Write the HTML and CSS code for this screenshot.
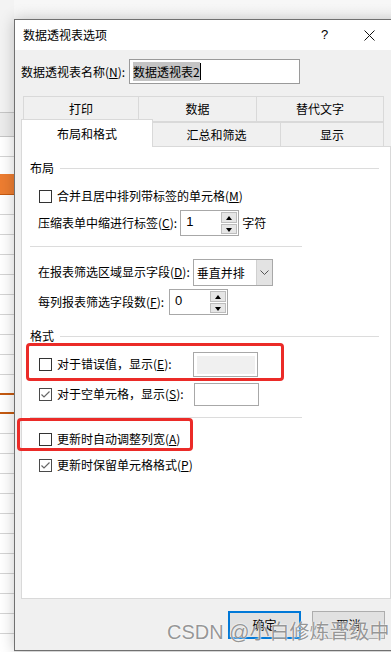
FILE: index.html
```html
<!DOCTYPE html>
<html lang="zh-CN">
<head>
<meta charset="utf-8">
<title>数据透视表选项</title>
<link rel="stylesheet" href="styles.css">
</head>
<body>
<div class="desktop">
  <div class="sheet">
    <div class="sheet-top"></div>
    <div class="sheet-head"></div>
    <div class="sheet-rows short"></div>
    <div class="sheet-sel"></div>
    <div class="sheet-rows mid"></div>
    <div class="sheet-band"></div>
    <div class="sheet-rows"></div>
  </div>

  <div class="dialog">
    <div class="titlebar">
      <span class="title">数据透视表选项</span>
      <span class="help">?</span>
      <svg class="close" width="11" height="11" viewBox="0 0 11 11"><path d="M0.5 0.5 L10.5 10.5 M10.5 0.5 L0.5 10.5" stroke="#111" stroke-width="1" fill="none"/></svg>
    </div>

    <div class="body">
      <div class="name-row">
        <span class="name-label">数据透视表名称(<u>N</u>):</span>
        <div class="name-input"><span class="sel">数据透视表2</span><span class="caret"></span></div>
      </div>

      <div class="tabs">
        <div class="tab-row back">
          <div class="tab w-print">打印</div>
          <div class="tab w-data">数据</div>
          <div class="tab w-alt">替代文字</div>
        </div>
        <div class="tab-row front">
          <div class="tab active w-layout">布局和格式</div>
          <div class="tab w-total">汇总和筛选</div>
          <div class="tab w-show">显示</div>
        </div>
      </div>

      <div class="panel">
        <div class="group-title g-layout"><span>布局</span></div>

        <div class="row check-row r-merge">
          <span class="cb"></span>
          <span>合并且居中排列带标签的单元格(<u>M</u>)</span>
        </div>

        <div class="row label-row r-indent">
          <span>压缩表单中缩进行标签(<u>C</u>):</span>
          <div class="spin">
            <span class="val">1</span>
            <span class="spin-btns"><span class="sb up"></span><span class="sb down"></span></span>
          </div>
          <span class="unit">字符</span>
        </div>

        <div class="sep s-one"></div>

        <div class="row label-row r-filter">
          <span>在报表筛选区域显示字段(<u>D</u>):</span>
          <div class="combo">
            <span class="val">垂直并排</span>
            <span class="drop"><svg width="9" height="5" viewBox="0 0 9 5"><path d="M0.5 0.5 L4.5 4.5 L8.5 0.5" stroke="#555" fill="none"/></svg></span>
          </div>
        </div>

        <div class="row label-row r-count">
          <span>每列报表筛选字段数(<u>F</u>):</span>
          <div class="spin spin-count">
            <span class="val">0</span>
            <span class="spin-btns"><span class="sb up"></span><span class="sb down"></span></span>
          </div>
        </div>

        <div class="group-title g-format"><span>格式</span></div>

        <div class="row check-row r-error">
          <span class="cb"></span>
          <span>对于错误值，显示(<u>E</u>):</span>
          <div class="field err"><span class="field-fill"></span></div>
        </div>

        <div class="row check-row r-empty">
          <span class="cb checked"><svg width="11" height="11" viewBox="0 0 11 11"><path d="M1.5 5.5 L4 8 L9.5 2.5" stroke="#666" stroke-width="1.2" fill="none"/></svg></span>
          <span>对于空单元格，显示(<u>S</u>):</span>
          <div class="field empty"></div>
        </div>

        <div class="sep s-two"></div>

        <div class="row check-row r-auto">
          <span class="cb"></span>
          <span>更新时自动调整列宽(<u>A</u>)</span>
        </div>

        <div class="row check-row r-keep">
          <span class="cb checked"><svg width="11" height="11" viewBox="0 0 11 11"><path d="M1.5 5.5 L4 8 L9.5 2.5" stroke="#666" stroke-width="1.2" fill="none"/></svg></span>
          <span>更新时保留单元格格式(<u>P</u>)</span>
        </div>
      </div>

      <div class="buttons">
        <div class="btn default">确定</div>
        <div class="btn">取消</div>
      </div>
    </div>
  </div>

  <div class="mark mark-error"></div>
  <div class="mark mark-auto"></div>
  <div class="watermark">CSDN @小白修炼晋级中</div>
</div>
</body>
</html>
```

FILE: styles.css
```css
* { box-sizing: border-box; }

html, body {
  margin: 0;
  padding: 0;
}

body {
  font-family: "Noto Sans CJK SC", "Noto Sans", sans-serif;
  font-size: 12px;
  line-height: 16px;
  color: #000;
  background: #f3f3f3;
}

u { text-decoration: underline; text-underline-offset: 1px; }

.desktop {
  position: relative;
  width: 391px;
  height: 652px;
  overflow: hidden;
  background: linear-gradient(to bottom, #f7f7f7, #eeeeee);
}

/* spreadsheet strip behind the dialog */
.sheet {
  width: 14px;
  height: 652px;
  display: flex;
  flex-direction: column;
  background: #fff;
}
.sheet-top { height: 112px; background: #f3f3f3; }
.sheet-head {
  height: 25px;
  background: #ececec;
  border-top: 1px solid #c6c6c6;
  border-bottom: 1px solid #c6c6c6;
}
.sheet-rows {
  flex: 1;
  background: repeating-linear-gradient(to bottom, #fff 0 19px, #d4d4d4 19px 20px);
}
.sheet-rows.short { flex: 0 0 37px; }
.sheet-rows.mid { flex: 0 0 198px; }
.sheet-sel {
  height: 21px;
  background: #ed7d31;
  border-bottom: 1px solid #c55a11;
}
.sheet-band {
  height: 21px;
  border-top: 2px solid #c55a11;
  border-bottom: 2px solid #c55a11;
  background: #fff;
}

/* dialog window */
.dialog {
  position: absolute;
  left: 14px;
  top: 19px;
  width: 392px;
  height: 632px;
  border: 1px solid #707070;
  background: #f0f0f0;
  box-shadow: 0 0 14px rgba(0, 0, 0, 0.22);
  display: flex;
  flex-direction: column;
}

.titlebar {
  height: 30px;
  background: #fff;
  display: flex;
  align-items: center;
  padding-left: 8px;
  flex: 0 0 auto;
}
.title { flex: 1; }
.help {
  width: 7px;
  margin-right: 36px;
  font-family: "Liberation Sans", sans-serif;
  font-size: 13px;
}
.close { margin-right: 30px; }

.body {
  padding-left: 6px;
  flex: 1;
}

.name-row {
  display: flex;
  align-items: center;
  margin-top: 9px;
  height: 25px;
}
.name-label { width: 108px; }
.name-input {
  width: 171px;
  height: 25px;
  border: 1px solid #9a9a9a;
  background: #fff;
  display: flex;
  align-items: center;
  padding-left: 3px;
}
.sel {
  background: #c4c4c4;
  height: 19px;
  line-height: 19px;
}
.caret {
  width: 1px;
  height: 17px;
  background: #000;
}

/* tabs */
.tabs { margin-top: 12px; }
.tab-row { display: flex; }
.tab-row.back { margin-left: 2px; height: 26px; }
.tab-row.front { height: 24px; }
.tab {
  border: 1px solid #d9d9d9;
  border-bottom: none;
  background: #f0f0f0;
  display: flex;
  align-items: center;
  justify-content: center;
}
.tab-row.back .tab { border-bottom: 1px solid #d9d9d9; height: 26px; }
.tab-row.front .tab { height: 24px; padding-top: 1px; }
.tab + .tab { margin-left: -1px; }
.w-print { width: 116px; }
.w-data { width: 119px; }
.w-alt { width: 128px; }
.w-layout { width: 132px; }
.w-total { width: 129px; }
.w-show { width: 104px; }
.tab-row.front .tab.active {
  height: 28px;
  margin-top: -3px;
  background: #fff;
  position: relative;
  z-index: 1;
  padding-top: 0;
}

/* panel */
.panel {
  width: 370px;
  height: 453px;
  border: 1px solid #d9d9d9;
  background: #fff;
  display: flex;
  flex-direction: column;
}

.group-title {
  display: flex;
  align-items: center;
  height: 16px;
  padding-left: 8px;
  padding-right: 11px;
}
.group-title::after {
  content: "";
  flex: 1;
  height: 1px;
  background: #dcdcdc;
  margin-left: 6px;
}
.g-layout { margin-top: 13px; }
.g-format { margin-top: 13px; }

.row {
  display: flex;
  align-items: center;
}
.check-row { padding-left: 17px; height: 16px; }
.label-row { padding-left: 16px; height: 26px; }

.r-merge { margin-top: 12px; }
.r-indent { margin-top: 6px; }
.r-filter { margin-top: 12px; }
.r-count { margin-top: 4px; }
.r-error { margin-top: 7px; height: 26px; }
.r-empty { margin-top: 5px; height: 24px; }
.r-auto { margin-top: 13px; }
.r-keep { margin-top: 10px; }

.sep {
  width: 272px;
  height: 1px;
  background: #dcdcdc;
  margin-left: 8px;
}
.s-one { margin-top: 10px; }
.s-two { margin-top: 11px; }

.cb {
  width: 13px;
  height: 13px;
  border: 1px solid #333;
  background: #fff;
  margin-right: 5px;
  flex: 0 0 auto;
  display: flex;
  align-items: center;
  justify-content: center;
}
.cb.checked { border-color: #4a4a4a; }

.spin {
  width: 59px;
  height: 26px;
  border: 1px solid #a8a8a8;
  background: #fff;
  display: flex;
  margin-left: 3px;
}
.spin.spin-count { margin-left: 5px; }
.spin .val {
  flex: 1;
  padding-left: 5px;
  line-height: 22px;
  font-family: "Liberation Sans", sans-serif;
  font-size: 13px;
}
.spin-btns {
  width: 17px;
  padding: 1px 1px 1px 0;
  display: flex;
  flex-direction: column;
  gap: 1px;
}
.sb {
  flex: 1;
  background: #e6e6e6;
  border: 1px solid #bdbdbd;
  position: relative;
}
.sb::after {
  content: "";
  position: absolute;
  left: 4px;
  width: 0;
  height: 0;
  border-left: 3.5px solid transparent;
  border-right: 3.5px solid transparent;
}
.sb.up::after { top: 3px; border-bottom: 4px solid #000; }
.sb.down::after { top: 3px; border-top: 4px solid #000; }
.unit { margin-left: 3px; }

.combo {
  width: 80px;
  height: 27px;
  border: 1px solid #a8a8a8;
  background: #fff;
  display: flex;
  margin-left: 3px;
}
.combo .val { flex: 1; padding-left: 3px; line-height: 25px; }
.drop {
  width: 16px;
  background: #e3e3e3;
  border-left: 1px solid #d0d0d0;
  display: flex;
  align-items: center;
  justify-content: center;
}

.field {
  width: 65px;
  background: #fff;
  border: 1px solid #a8a8a8;
}
.field.err { height: 25px; padding: 3px 2px 2px 3px; display: flex; margin-left: 21px; }
.field-fill { flex: 1; background: #f0f0f0; }
.field.empty { height: 23px; margin-left: 10px; }

/* buttons */
.buttons {
  display: flex;
  padding-left: 207px;
  margin-top: 12px;
}
.btn {
  width: 73px;
  height: 28px;
  background: #e1e1e1;
  border: 1px solid #adadad;
  display: flex;
  align-items: center;
  justify-content: center;
}
.btn + .btn { margin-left: 11px; }
.btn.default { border: 2px solid #0078d7; }

/* annotation overlays */
.mark {
  position: absolute;
  border: 3px solid #eb2b28;
  border-radius: 4px;
}
.mark-error { left: 26px; top: 343px; width: 258px; height: 38px; }
.mark-auto { left: 17px; top: 418px; width: 176px; height: 33px; }

.watermark {
  position: absolute;
  left: 167px;
  top: 619px;
  font-family: "Liberation Sans", "Noto Sans CJK SC", sans-serif;
  font-size: 20px;
  line-height: 26px;
  color: rgba(110, 110, 110, 0.72);
  text-shadow: 0 0 2px #fff, 0 0 1px #fff;
  white-space: nowrap;
}
```
